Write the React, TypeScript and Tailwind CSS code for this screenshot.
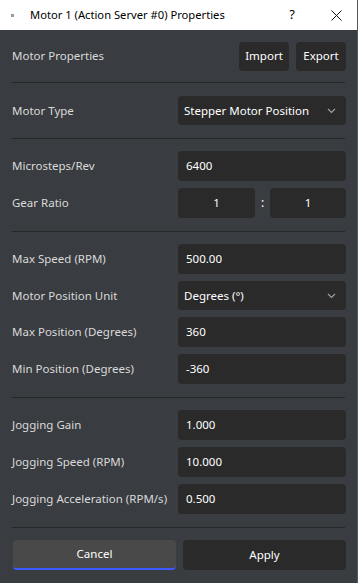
import React from "react";

const font = { fontFamily: '"Noto Sans", "Open Sans", sans-serif' };

function Divider() {
  return <div className="h-px bg-[#262729] mx-3 shrink-0" />;
}

function Label({ children }: { children: React.ReactNode }) {
  return <div className="text-[11.5px] text-[#dadada] whitespace-nowrap">{children}</div>;
}

function Field({ value, center }: { value: string; center?: boolean }) {
  return (
    <div
      className={[
        "h-[30px] rounded-[4px] bg-[#2a2a2a] flex items-center text-[11.5px] text-white",
        center ? "justify-center" : "px-[8px]",
      ].join(" ")}
    >
      {value}
    </div>
  );
}

function Select({ value }: { value: string }) {
  return (
    <div className="h-[29px] rounded-[4px] bg-[#2a2a2a] flex items-center pl-[6px] pr-[10px] text-[11.5px] text-white">
      <span>{value}</span>
      <svg className="ml-auto" width="9" height="6" viewBox="0 0 9 6">
        <path d="M1 1l3.5 3.5L8 1" fill="none" stroke="#9aa0a6" strokeWidth="1.2" />
      </svg>
    </div>
  );
}

function Row({ label, children }: { label: string; children: React.ReactNode }) {
  return (
    <div className="flex items-center">
      <div className="w-[178px] pl-3 shrink-0">
        <Label>{label}</Label>
      </div>
      <div className="flex-1 pr-[11px]">{children}</div>
    </div>
  );
}

export default function App() {
  return (
    <div className="w-[358px] h-[583px] flex flex-col bg-[#393c40] border-r border-[#55595e]" style={font}>
      {/* title bar */}
      <div className="h-[30px] bg-white flex items-center text-[11.2px] text-black shrink-0">
        <div className="w-[3px] h-[3px] bg-[#9a9a9a] ml-[11px]" />
        <div className="ml-[16px]">Motor 1 (Action Server #0) Properties</div>
        <div className="ml-auto w-[46px] text-center text-[13px]">?</div>
        <div className="w-[42px] flex justify-center">
          <svg width="11" height="11" viewBox="0 0 11 11">
            <path d="M0.5 0.5l10 10M10.5 0.5l-10 10" stroke="#111" strokeWidth="1" />
          </svg>
        </div>
      </div>

      <div className="flex items-center h-[52px] pl-3 pr-[11px] shrink-0">
        <Label>Motor Properties</Label>
        <div className="ml-auto flex gap-[7px]">
          <div className="h-[29px] w-[50px] rounded-[4px] bg-[#2a2a2a] flex items-center justify-center text-[11.5px] text-white">
            Import
          </div>
          <div className="h-[29px] w-[50px] rounded-[4px] bg-[#2a2a2a] flex items-center justify-center text-[11.5px] text-white">
            Export
          </div>
        </div>
      </div>
      <Divider />

      <div className="py-[13px]">
        <Row label="Motor Type">
          <Select value="Stepper Motor Position" />
        </Row>
      </div>
      <Divider />

      <div className="pt-[12px] pb-[13px] flex flex-col gap-[7px]">
        <Row label="Microsteps/Rev">
          <Field value="6400" />
        </Row>
        <Row label="Gear Ratio">
          <div className="flex items-center">
            <div className="w-[77px]">
              <Field value="1" center />
            </div>
            <div className="flex-1 text-center text-[12px] text-white">:</div>
            <div className="w-[76px]">
              <Field value="1" center />
            </div>
          </div>
        </Row>
      </div>
      <Divider />

      <div className="pt-[12px] pb-[13px] flex flex-col gap-[7px]">
        <Row label="Max Speed (RPM)">
          <Field value="500.00" />
        </Row>
        <Row label="Motor Position Unit">
          <Select value="Degrees (°)" />
        </Row>
        <Row label="Max Position (Degrees)">
          <Field value="360" />
        </Row>
        <Row label="Min Position (Degrees)">
          <Field value="-360" />
        </Row>
      </div>
      <Divider />

      <div className="pt-[12px] pb-[13px] flex flex-col gap-[7px]">
        <Row label="Jogging Gain">
          <Field value="1.000" />
        </Row>
        <Row label="Jogging Speed (RPM)">
          <Field value="10.000" />
        </Row>
        <Row label="Jogging Acceleration (RPM/s)">
          <Field value="0.500" />
        </Row>
      </div>
      <Divider />

      <div className="flex gap-[7px] pl-[13px] pr-[11px] pt-[12px]">
        <div className="flex-1 h-[30px] rounded-[4px] bg-[#4a4949] border-b-2 border-[#3d5afe] flex items-center justify-center text-[11.5px] text-white">
          Cancel
        </div>
        <div className="flex-1 h-[30px] rounded-[4px] bg-[#2a2a2a] flex items-center justify-center text-[11.5px] text-white">
          Apply
        </div>
      </div>
    </div>
  );
}
